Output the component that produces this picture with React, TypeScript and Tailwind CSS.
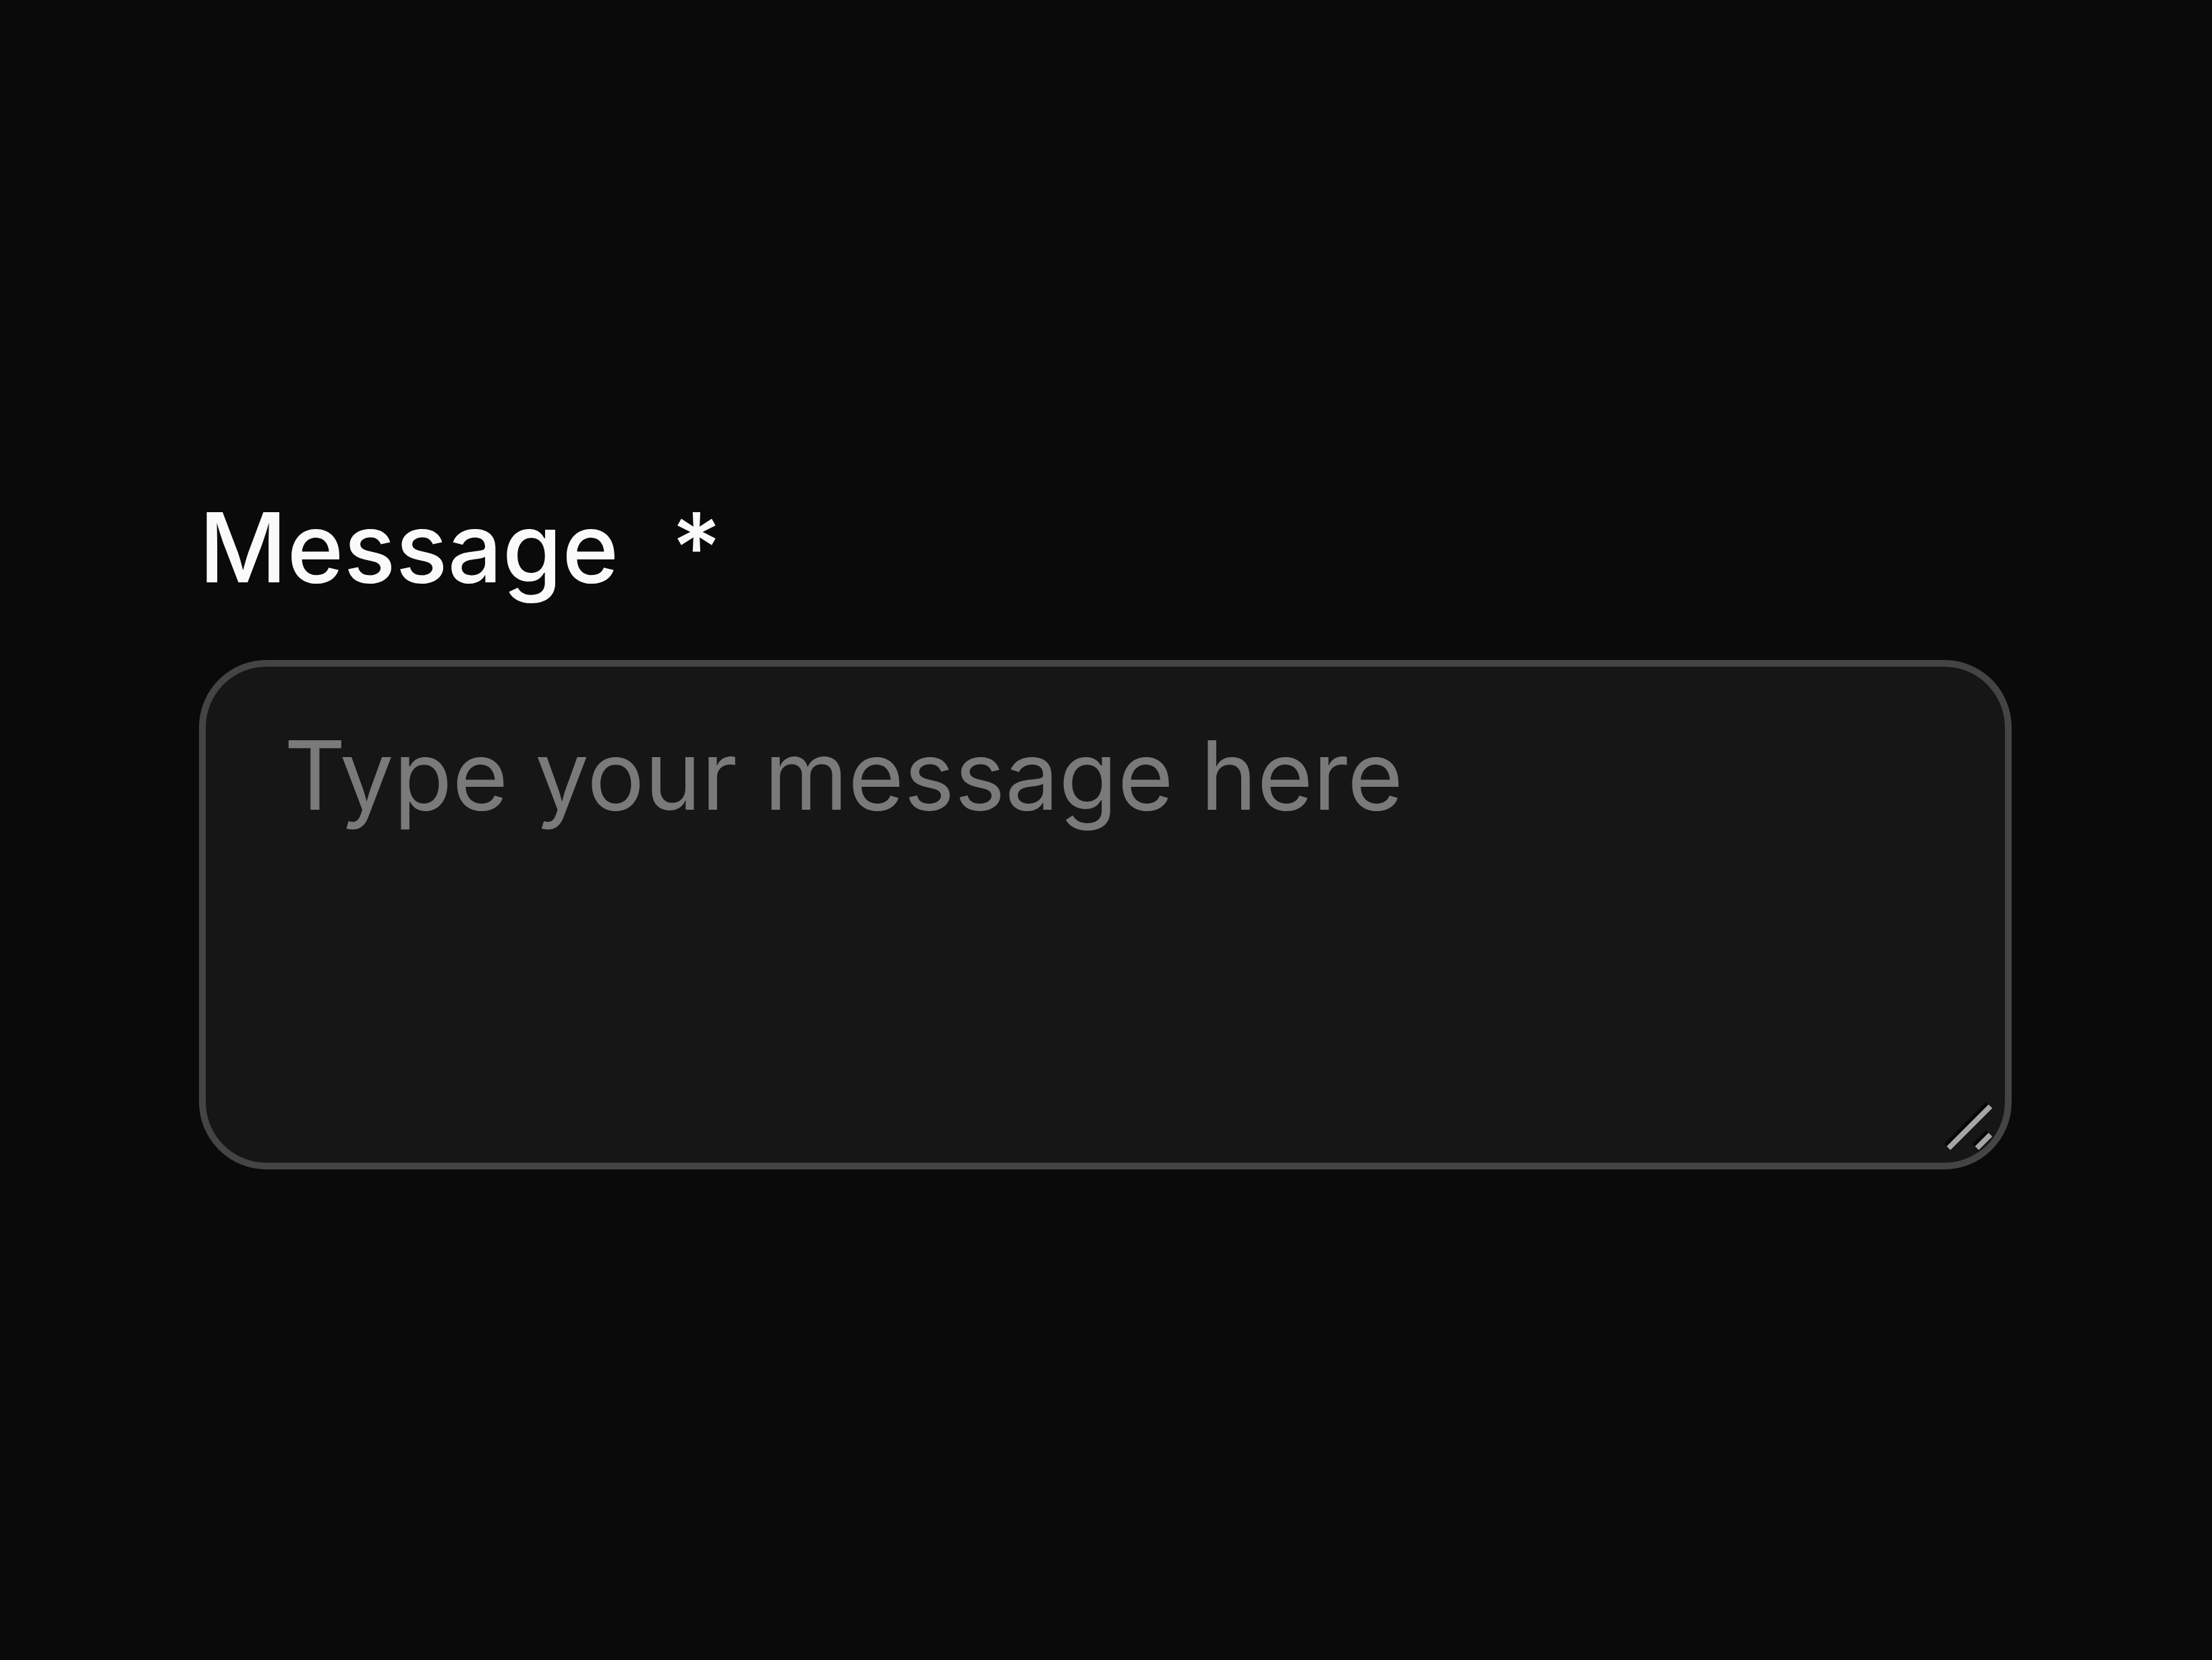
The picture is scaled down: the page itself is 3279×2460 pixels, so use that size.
import React from "react";

export default function App() {
  return (
    <div
      className="min-h-[2460px] w-full bg-[#0a0a0a] pl-[295px] pt-[739px]"
      style={{ fontFamily: "Inter, 'Noto Sans', sans-serif" }}
    >
      <label
        htmlFor="message"
        className="mb-[96px] flex items-start text-[143px] leading-none font-medium text-[#fafafa]"
      >
        <span>Message</span>
        <span className="ml-[78px]">*</span>
      </label>
      <div className="relative h-[755px] w-[2687px]">
        <textarea
          id="message"
          placeholder="Type your message here"
          className="block h-full w-full resize-none rounded-[100px] border-[10px] border-[#444444] bg-[#161616] pt-[89px] pl-[116px] pr-[120px] text-[142px] leading-none text-[#e5e5e5] placeholder:text-[#7a7a7a] outline-none"
          style={{ fontFamily: "Inter, 'Noto Sans', sans-serif" }}
        />
        <svg
          className="pointer-events-none absolute right-0 bottom-0"
          width="100"
          height="100"
          viewBox="0 0 100 100"
        >
          <g strokeWidth="8" strokeLinecap="butt">
            <line x1="3" y1="65" x2="65" y2="3" stroke="#050505" />
            <line x1="45" y1="65" x2="65" y2="45" stroke="#050505" />
            <line x1="6.5" y1="68.5" x2="68.5" y2="6.5" stroke="#a6a6a6" />
            <line x1="48.5" y1="68.5" x2="68.5" y2="48.5" stroke="#a6a6a6" />
          </g>
        </svg>
      </div>
    </div>
  );
}
